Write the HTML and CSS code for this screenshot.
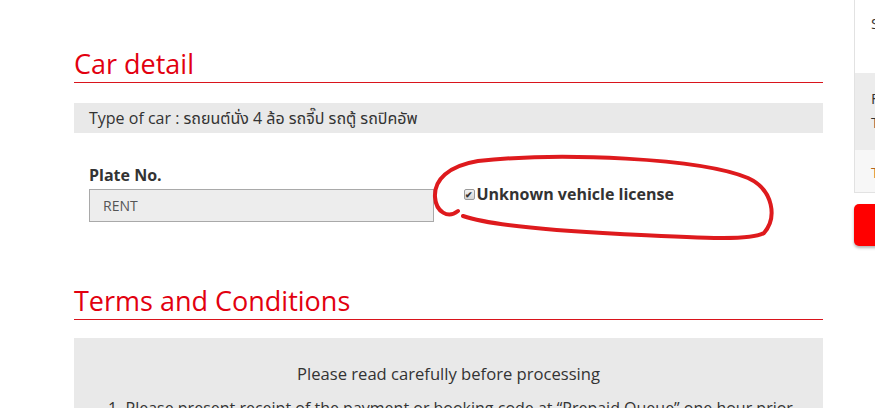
FILE: index.html
```html
<!DOCTYPE html>
<html>
<head>
<title>Booking - Car detail</title>
<meta name="viewport" content="width=device-width, initial-scale=1.0">
<link rel="stylesheet" href="styles.css">
</head>
<body>

<div class="page">
    <div class="main">
        <h2 class="section-title">Car detail</h2>
        <div class="car-type">Type of car : รถยนต์นั่ง 4 ล้อ รถจี๊ป รถตู้ รถปิคอัพ</div>

        <div class="form-row">
            <div class="col">
                <label for="plate" class="field-label">Plate No.</label>
                <input type="text" id="plate" class="field-input" value="RENT" readonly>
            </div>
            <div class="col col-check">
                <label class="check-label"><span class="check-box">&#10004;</span>Unknown vehicle license</label>
                <svg class="scribble" width="360" height="100" viewBox="425 150 360 100">
                    <path d="M458 213 C448 221, 436 214, 435 199 C434 182, 448 168, 478 163 C560 154, 700 160, 748 180 C774 192, 777 220, 764 235 C752 243, 700 240, 620 236 C560 233, 492 228, 463 218" fill="none" stroke="#de1a1d" stroke-width="4" stroke-linecap="round"/>
                </svg>
            </div>
        </div>

        <h2 class="section-title terms-title">Terms and Conditions</h2>
        <div class="terms">
            <p class="terms-head">Please read carefully before processing</p>
            <p class="terms-item">1. Please present receipt of the payment or booking code at “Prepaid Queue” one hour prior to the departure time.</p>
        </div>
    </div>

    <div class="sidebar">
        <div class="summary">
            <div class="summary-top">Service: Parking</div>
            <div class="summary-mid">
                From: 12/09/2018<br>
                To: 15/09/2018
            </div>
            <div class="summary-total">Total 1,200 THB</div>
        </div>
        <button type="button" class="btn-book">Confirm</button>
    </div>
</div>

</body>
</html>
```

FILE: styles.css
```css
body {
    margin: 0;
    font-family: 'Open Sans', 'Noto Sans Thai', 'Noto Sans', sans-serif;
    color: #333;
    background: #fff;
    overflow: hidden;
}
.page {
    display: flex;
    padding-left: 74px;
    width: 1200px;
}
.main {
    width: 749px;
    flex-shrink: 0;
}
.section-title {
    margin: 48px 0 0;
    padding-bottom: 2px;
    font-size: 27px;
    line-height: 32px;
    font-weight: 500;
    color: #e2000f;
    border-bottom: 1px solid #d9141c;
}
.car-type {
    margin-top: 20px;
    background: #e9e9e9;
    height: 30px;
    line-height: 30px;
    padding: 0 15px;
    font-size: 16px;
    color: #333;
}
.form-row {
    display: grid;
    grid-template-columns: 1fr 1fr;
    margin-top: 31px;
}
.col {
    padding: 0 15px;
    position: relative;
}
.field-label {
    display: block;
    font-size: 16px;
    line-height: 22px;
    font-weight: 700;
    color: #333;
    margin-bottom: 3px;
}
.field-input {
    box-sizing: border-box;
    width: 100%;
    height: 33px;
    padding: 0 13px;
    border: 1px solid #a9a9a9;
    background: #ededed;
    font-family: 'Open Sans', sans-serif;
    font-size: 14px;
    color: #555;
    outline: none;
}
.col-check {
    padding-top: 19px;
}
.check-label {
    display: flex;
    align-items: center;
    font-size: 16px;
    line-height: 22px;
    font-weight: 700;
    color: #333;
}
.check-box {
    box-sizing: border-box;
    width: 11px;
    height: 11px;
    margin: 0 2px 0 0;
    border: 1px solid #9a9a9a;
    border-radius: 2px;
    background: linear-gradient(#f2f2f2, #d6d6d6);
    font-size: 9px;
    line-height: 9px;
    text-align: center;
    color: #333;
}
.scribble {
    position: absolute;
    left: -24px;
    top: -16px;
    overflow: visible;
}
.terms-title {
    margin-top: 63px;
}
.terms {
    margin-top: 18px;
    background: #e9e9e9;
    padding: 25px 8px 20px;
    height: 200px;
}
.terms-head {
    margin: 0;
    text-align: center;
    font-size: 16.6px;
    line-height: 22px;
}
.terms-item {
    margin: 12px 0 0;
    padding: 0 20px 0 26px;
    font-size: 16px;
    line-height: 22px;
}
.sidebar {
    margin-left: 31px;
    width: 300px;
    flex-shrink: 0;
}
.summary {
    border-left: 1px solid #e2e2e2;
    border-bottom: 1px solid #e2e2e2;
    font-size: 15px;
}
.summary-top {
    height: 73px;
    padding: 13px 16px 0;
    box-sizing: border-box;
}
.summary-mid {
    background: #ececec;
    height: 77px;
    box-sizing: border-box;
    padding: 13px 16px 0;
    line-height: 24px;
}
.summary-total {
    background: #f7f7f7;
    height: 42px;
    box-sizing: border-box;
    padding: 12px 16px 0;
    color: #b5651d;
}
.btn-book {
    margin-top: 11px;
    width: 100%;
    height: 42px;
    border: none;
    border-radius: 5px;
    background: #f00;
    color: #fff;
    font-size: 16px;
    box-shadow: 0 2px 3px rgba(0, 0, 0, 0.3);
}
```
